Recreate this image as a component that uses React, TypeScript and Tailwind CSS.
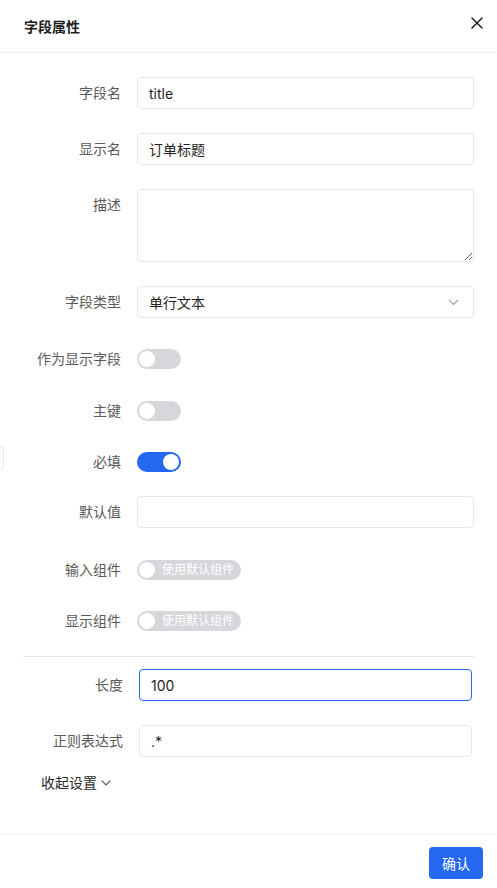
import React from "react";

const font = { fontFamily: 'Inter, "Noto Sans CJK SC", sans-serif' };

function Label({ children, top = false }: { children: React.ReactNode; top?: boolean }) {
  return (
    <div className={`w-[97px] shrink-0 text-right text-[14px] leading-[20px] text-[#5a5a5a] ${top ? "self-start pt-[6px]" : ""}`}>
      {children}
    </div>
  );
}

function TextInput({ value, focused = false }: { value: string; focused?: boolean }) {
  return (
    <div
      className={`flex-1 h-[32px] rounded-[4px] border flex items-center px-[11px] text-[14px] text-[#1f1f1f] ${
        focused ? "border-[#2468f2]" : "border-[#e6e7ea]"
      }`}
    >
      {value}
    </div>
  );
}

function Switch({ on = false }: { on?: boolean }) {
  return (
    <div className={`w-[44px] h-[20px] rounded-full flex items-center px-[2px] ${on ? "bg-[#2468f2] justify-end" : "bg-[#d6d7db] justify-start"}`}>
      <div className="w-[16px] h-[16px] rounded-full bg-white" />
    </div>
  );
}

function TextSwitch({ text }: { text: string }) {
  return (
    <div className="h-[20px] w-[104px] rounded-full bg-[#d6d7db] flex items-center pl-[2px] pr-[8px]">
      <div className="w-[16px] h-[16px] rounded-full bg-white shrink-0" />
      <span className="ml-[7px] text-[12px] leading-[20px] text-white whitespace-nowrap">{text}</span>
    </div>
  );
}

export default function App() {
  return (
    <div className="relative w-[497px] h-[888px] bg-white flex flex-col overflow-hidden" style={font}>
      <div className="absolute left-[-6px] top-[446px] w-[10px] h-[23px] rounded-[3px] border border-[#e6e7ea] bg-white" />
      {/* header */}
      <div className="h-[53px] shrink-0 border-b border-[#f2f3f5] flex items-center justify-between pl-[24px] pr-[14px]">
        <div className="text-[14px] font-semibold text-[#1d1d1d]">字段属性</div>
        <svg width="12" height="12" viewBox="0 0 12 12" className="mb-[6px]">
          <path d="M1 1 L11 11 M11 1 L1 11" stroke="#1f1f1f" strokeWidth="1.5" strokeLinecap="round" />
        </svg>
      </div>

      {/* body */}
      <div className="flex-1 pl-[24px] pr-[23px] pt-[24px] flex flex-col">
        <div className="flex items-center gap-[16px]">
          <Label>字段名</Label>
          <TextInput value="title" />
        </div>
        <div className="flex items-center gap-[16px] mt-[24px]">
          <Label>显示名</Label>
          <TextInput value="订单标题" />
        </div>
        <div className="flex gap-[16px] mt-[24px]">
          <Label top>描述</Label>
          <textarea className="flex-1 h-[73px] rounded-[4px] border border-[#e6e7ea] outline-none px-[11px] py-[5px] text-[14px]" />
        </div>
        <div className="flex items-center gap-[16px] mt-[24px]">
          <Label>字段类型</Label>
          <div className="flex-1 h-[32px] rounded-[4px] border border-[#e6e7ea] flex items-center justify-between pl-[11px] pr-[14px] text-[14px] text-[#1f1f1f]">
            <span>单行文本</span>
            <svg width="11" height="7" viewBox="0 0 11 7">
              <path d="M0.8 0.8 L5.5 5.5 L10.2 0.8" fill="none" stroke="#9a9ca3" strokeWidth="1.1" />
            </svg>
          </div>
        </div>
        <div className="flex items-center gap-[16px] mt-[31px] h-[20px]">
          <Label>作为显示字段</Label>
          <Switch />
        </div>
        <div className="flex items-center gap-[16px] mt-[32px] h-[20px]">
          <Label>主键</Label>
          <Switch />
        </div>
        <div className="flex items-center gap-[16px] mt-[31px] h-[20px]">
          <Label>必填</Label>
          <Switch on />
        </div>
        <div className="flex items-center gap-[16px] mt-[24px]">
          <Label>默认值</Label>
          <TextInput value="" />
        </div>
        <div className="flex items-center gap-[16px] mt-[32px] h-[20px]">
          <Label>输入组件</Label>
          <TextSwitch text="使用默认组件" />
        </div>
        <div className="flex items-center gap-[16px] mt-[31px] h-[20px]">
          <Label>显示组件</Label>
          <TextSwitch text="使用默认组件" />
        </div>

        <div className="mt-[25px] h-px bg-[#e8e9eb] -ml-px" />

        <div className="px-[2px] mt-[12px] flex flex-col">
          <div className="flex items-center gap-[16px]">
            <Label>长度</Label>
            <TextInput value="100" focused />
          </div>
          <div className="flex items-center gap-[16px] mt-[24px]">
            <Label>正则表达式</Label>
            <TextInput value=".*" />
          </div>
        </div>

        <div className="mt-[16px] ml-[17px] flex items-center gap-[4px] text-[14px] leading-[20px] text-[#2a2a2a]">
          <span>收起设置</span>
          <svg width="10" height="6" viewBox="0 0 10 6">
            <path d="M0.7 0.7 L5 5 L9.3 0.7" fill="none" stroke="#555" strokeWidth="1.1" />
          </svg>
        </div>
      </div>

      {/* footer */}
      <div className="h-[54px] shrink-0 border-t border-[#f2f3f5] flex justify-end items-start pt-[12px] pr-[14px]">
        <button className="w-[54px] h-[32px] rounded-[4px] bg-[#2468f2] text-white text-[14px]">确认</button>
      </div>
    </div>
  );
}
